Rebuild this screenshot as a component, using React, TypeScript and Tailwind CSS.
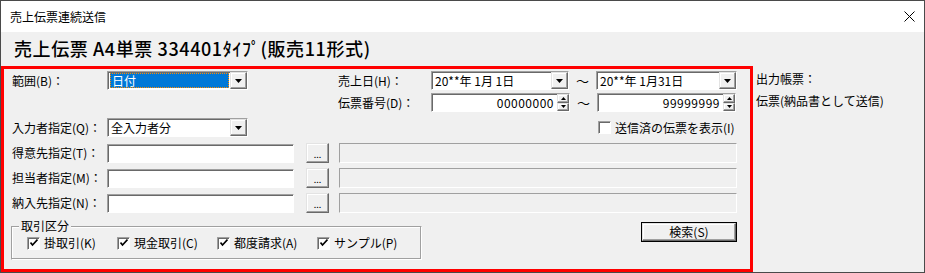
import React from 'react';

const font = "font-['Noto_Sans_CJK_JP','Noto_Sans_CJK_SC',sans-serif]";

const sunken =
  'border border-[#a0a0a0] border-r-white border-b-white shadow-[inset_1px_1px_0_#696969]';
const raised =
  'bg-[#f0f0f0] border border-[#e3e3e3] border-r-[#696969] border-b-[#696969] shadow-[inset_-1px_-1px_0_#a0a0a0,inset_1px_1px_0_#fff]';

const Tri = () => (
  <svg width="7" height="4" viewBox="0 0 7 4">
    <path d="M0 0h7L3.5 4z" fill="#000" />
  </svg>
);

const SmallTri = ({ up }: { up?: boolean }) => (
  <svg width="5" height="3" viewBox="0 0 5 3">
    <path d={up ? 'M0 3h5L2.5 0z' : 'M0 0h5L2.5 3z'} fill="#000" />
  </svg>
);

const Combo = ({ w, text, selected }: { w: string; text: string; selected?: boolean }) => (
  <div className={`shrink-0 flex h-[19px] bg-white ${sunken} ${w}`}>
    <div className="flex-1 flex p-[1px] pl-[2px]">
      {selected ? (
        <div className="flex-1 flex items-center bg-[#0078d7] text-white outline outline-1 outline-dotted outline-[#ff8c00] -outline-offset-1 pl-[2px]">
          {text}
        </div>
      ) : (
        <div className="flex-1 flex items-center pl-[1px]">{text}</div>
      )}
    </div>
    <div className={`w-[17px] shrink-0 flex items-center justify-center ${raised}`}>
      <Tri />
    </div>
  </div>
);

const Spin = ({ value }: { value: string }) => (
  <div className={`shrink-0 flex h-[19px] w-[139px] bg-white ${sunken}`}>
    <div className="flex-1 flex items-center justify-end pr-[3px] tracking-[0.5px]">{value}</div>
    <div className="w-[12px] shrink-0 flex flex-col">
      <div className={`flex-1 flex items-center justify-center ${raised}`}>
        <SmallTri up />
      </div>
      <div className={`flex-1 flex items-center justify-center ${raised}`}>
        <SmallTri />
      </div>
    </div>
  </div>
);

const Check = ({ checked }: { checked?: boolean }) => (
  <div className={`shrink-0 w-[13px] h-[13px] bg-white flex items-center justify-center ${sunken}`}>
    {checked && (
      <svg width="8" height="8" viewBox="0 0 8 8">
        <path d="M0.5 3.5l2 2.5 5-5.5" stroke="#000" strokeWidth="1.6" fill="none" />
      </svg>
    )}
  </div>
);

const PartyRow = ({ label }: { label: string }) => (
  <div className="flex items-center h-[20px]">
    <div className="w-[95px] shrink-0">{label}</div>
    <div className={`shrink-0 w-[187px] h-[19px] bg-white ${sunken}`} />
    <div className={`shrink-0 ml-[12px] w-[23px] h-[20px] flex items-end justify-center pb-[3px] text-[9px] leading-none ${raised}`}>
      ...
    </div>
    <div className="shrink-0 ml-[10px] w-[398px] h-[20px] bg-[#f0f0f0] border border-[#a0a0a0] border-r-white border-b-white" />
  </div>
);

export default function App() {
  return (
    <div className={`w-[925px] h-[273px] flex flex-col border border-[#4a4a4a] bg-[#f0f0f0] text-[12px] leading-none text-black ${font}`}>
      <div className="h-[31px] shrink-0 bg-white flex items-center justify-between pl-[9px] pr-[9px]">
        <span>売上伝票連続送信</span>
        <svg width="11" height="11" viewBox="0 0 11 11">
          <path d="M0.5 0.5l10 10M10.5 0.5l-10 10" stroke="#000" strokeWidth="1" />
        </svg>
      </div>
      <div className="h-[34px] shrink-0 flex items-center pl-[13px] pb-[2px] text-[18px] font-medium tracking-[0.6px]">
        売上伝票 A4単票 334401ﾀｲﾌﾟ(販売11形式)
      </div>
      <div className="flex flex-1">
        <div className="shrink-0 w-[752px] h-[206px] border-[3px] border-[#ff0000] pt-[2px]">
          <div className="pl-[8px]">
            <div className="flex items-center h-[19px]">
              <div className="w-[95px] shrink-0">範囲(B)：</div>
              <Combo w="w-[141px]" text="日付" selected />
              <div className="ml-[90px] w-[93px] shrink-0">売上日(H)：</div>
              <Combo w="w-[138px]" text="20**年 1月 1日" />
              <div className="w-[27px] shrink-0 text-center text-[13px]">～</div>
              <Combo w="w-[141px]" text="20**年 1月31日" />
            </div>
            <div className="flex items-center h-[19px] mt-[3px]">
              <div className="ml-[326px] w-[93px] shrink-0">伝票番号(D)：</div>
              <Spin value="00000000" />
              <div className="w-[27px] shrink-0 text-center text-[13px]">～</div>
              <Spin value="99999999" />
            </div>
            <div className="flex items-center h-[19px] mt-[6px]">
              <div className="w-[95px] shrink-0">入力者指定(Q)：</div>
              <Combo w="w-[141px]" text="全入力者分" />
              <div className="ml-[350px] flex items-center gap-[4px]">
                <Check />
                <span>送信済の伝票を表示(I)</span>
              </div>
            </div>
            <div className="mt-[6px] flex flex-col gap-[5px]">
              <PartyRow label="得意先指定(T)：" />
              <PartyRow label="担当者指定(M)：" />
              <PartyRow label="納入先指定(N)：" />
            </div>
          </div>
          <div className="flex items-start pl-[7px] mt-[9px]">
            <div className="relative shrink-0 mt-[4px] w-[411px] h-[34px] border border-[#a0a0a0] border-r-white border-b-white shadow-[inset_-1px_-1px_0_#a0a0a0,inset_1px_1px_0_#fff] flex items-center pl-[15px]">
              <span className="absolute -top-[7px] left-[7px] bg-[#f0f0f0] px-[2px]">取引区分</span>
              <div className="flex items-center gap-[4px] w-[90px] shrink-0">
                <Check checked />
                <span>掛取引(K)</span>
              </div>
              <div className="flex items-center gap-[4px] w-[100px] shrink-0">
                <Check checked />
                <span>現金取引(C)</span>
              </div>
              <div className="flex items-center gap-[4px] w-[100px] shrink-0">
                <Check checked />
                <span>都度請求(A)</span>
              </div>
              <div className="flex items-center gap-[4px]">
                <Check checked />
                <span>サンプル(P)</span>
              </div>
            </div>
            <div className="shrink-0 ml-[219px] w-[96px] h-[20px] border border-black">
              <div className={`w-full h-full flex items-center justify-center ${raised}`}>検索(S)</div>
            </div>
          </div>
        </div>
        <div className="pl-[3px] pt-[7px] flex flex-col gap-[10px]">
          <span>出力帳票：</span>
          <span>伝票(納品書として送信)</span>
        </div>
      </div>
    </div>
  );
}
